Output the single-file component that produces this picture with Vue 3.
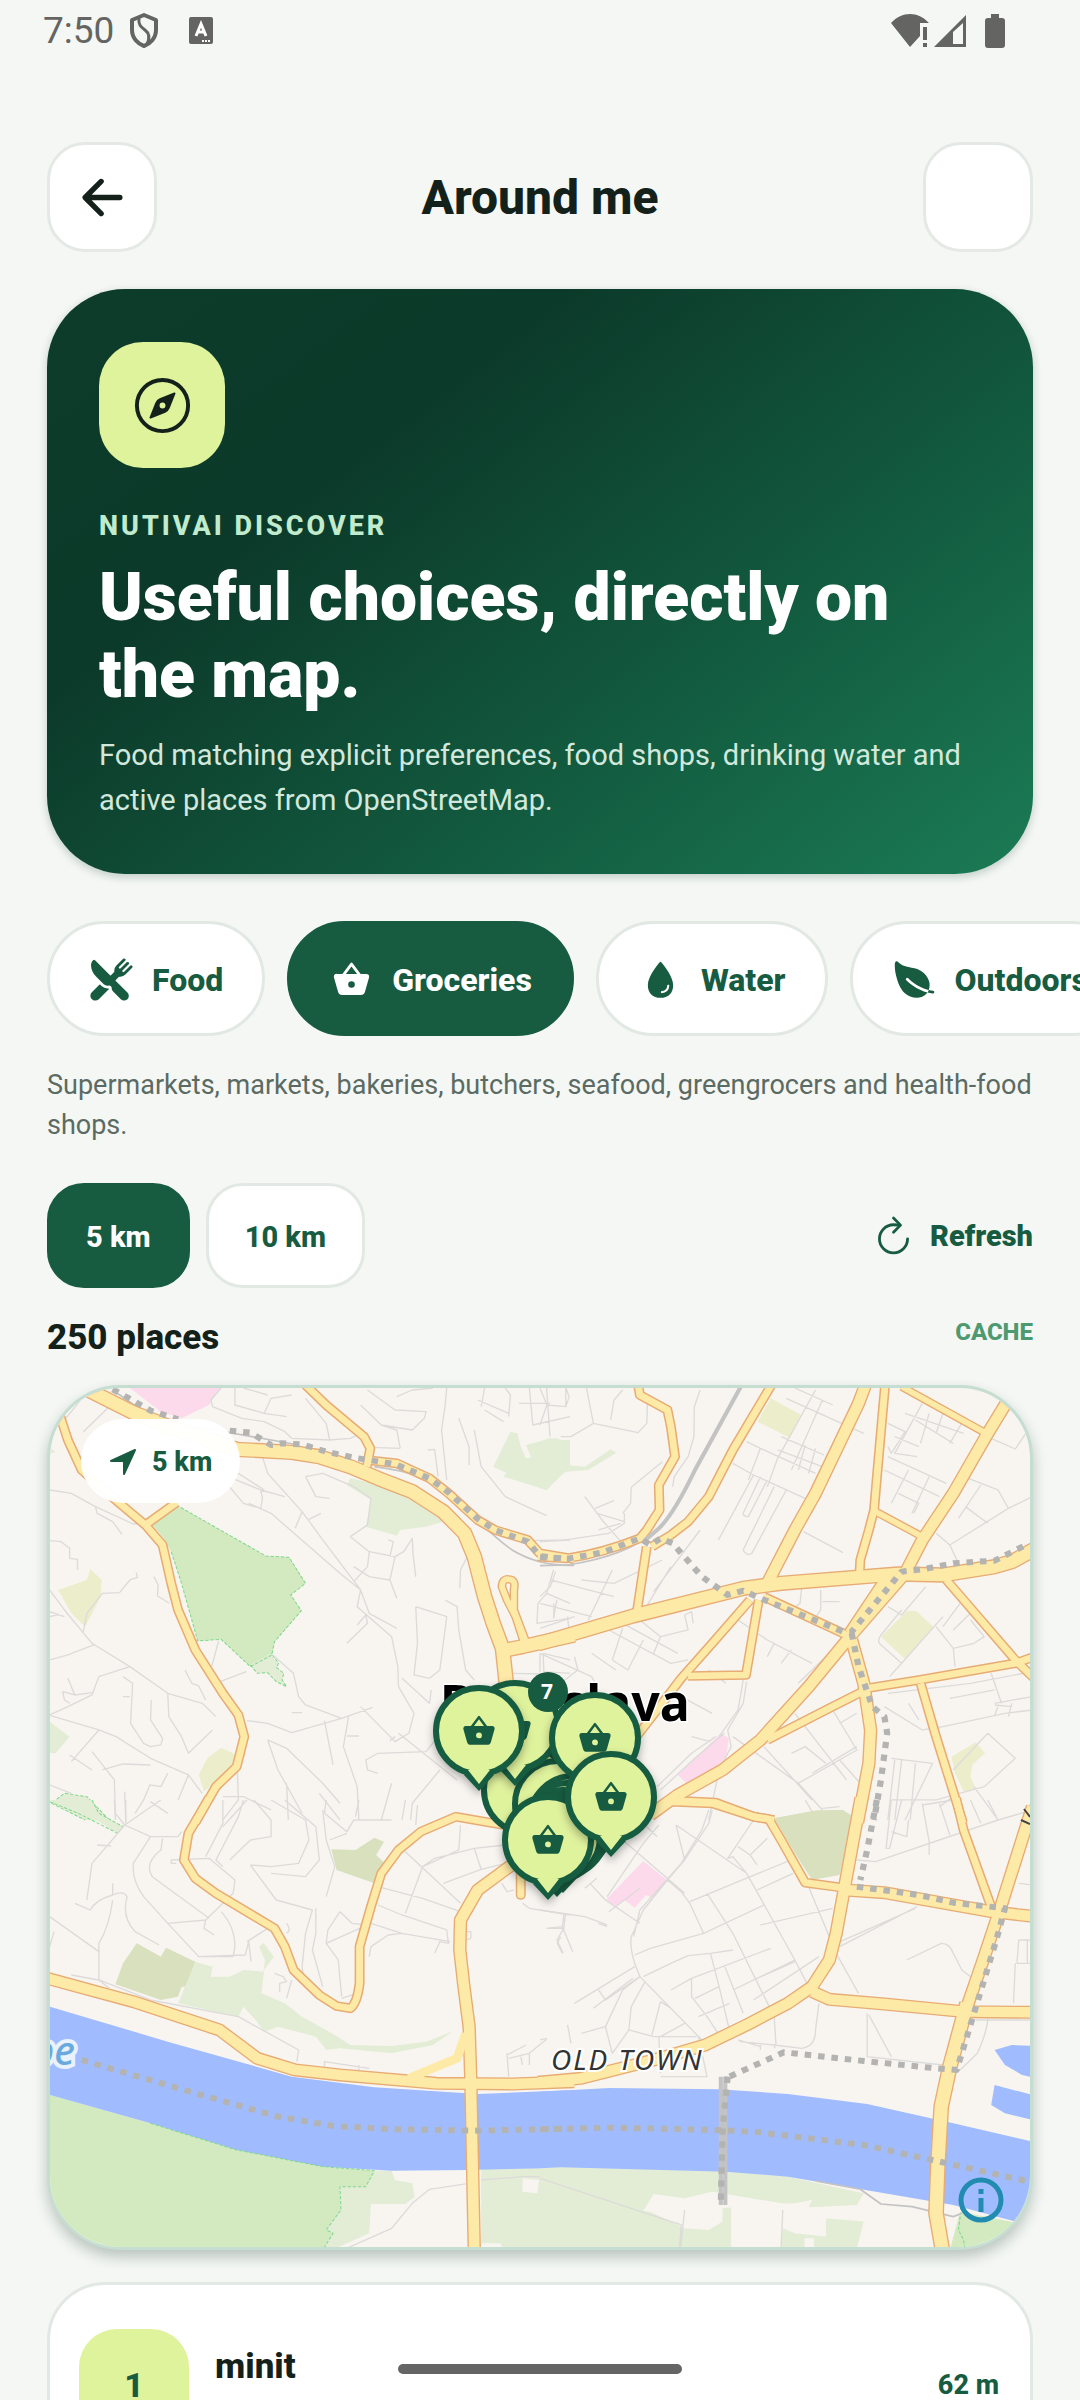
<script setup>
import { ref } from 'vue'

const basketPath =
  'M424.11 192H360L268.8 70.4a16 16 0 0 0-25.6 0L152 192H87.89a32.57 32.57 0 0 0-32.62 32 30.3 30.3 0 0 0 1.31 9l46.27 163.14a50.72 50.72 0 0 0 48.84 36.91h208.62a51.21 51.21 0 0 0 49-36.86l46.33-163.36a15.62 15.62 0 0 0 .46-2.36l.53-4.41a13.3 13.3 0 0 0 .06-1.33A32.57 32.57 0 0 0 424.11 192zM256 106.67L320 192H192zM256 350.26a37.71 37.71 0 1 1 37.88-37.71A37.88 37.88 0 0 1 256 350.26z'

const categories = [
  {
    id: 'food',
    label: 'Food',
    path: 'M357.57 223.94a79.48 79.48 0 0 0 56.58-23.44l77-76.95c6.09-6.09 6.65-16 .85-22.39a16 16 0 0 0-23.17-.56l-68.63 68.58a12.29 12.29 0 0 1-17.37 0c-4.79-4.78-4.53-12.86.25-17.64l68.33-68.33a16 16 0 0 0-.56-23.16A15.62 15.62 0 0 0 440.27 56a16.71 16.71 0 0 0-11.81 4.9l-68.27 68.26a12.29 12.29 0 0 1-17.37 0c-4.78-4.78-4.53-12.86.25-17.64l68.33-68.31a16 16 0 0 0-.56-23.16A15.62 15.62 0 0 0 400.26 16a16.73 16.73 0 0 0-11.81 4.9L311.5 97.85a79.49 79.49 0 0 0-23.44 56.59v8.23a16 16 0 0 1-4.69 11.33l-35.61 35.62a4 4 0 0 1-5.66 0L68.82 36.33a16 16 0 0 0-22.58-.06C31.09 51.28 23 72.47 23 97.54c-.1 41.4 21.66 89 56.79 124.08l85.45 85.45A64.79 64.79 0 0 0 211 326a64 64 0 0 0 16.21-2.08 16.24 16.24 0 0 1 4.07-.53 15.93 15.93 0 0 1 10.83 4.25l11.39 10.52a16.12 16.12 0 0 1 4.6 11.23v5.54a47.73 47.73 0 0 0 13.77 33.65l90.05 91.57.09.1a53.29 53.29 0 0 0 75.36-75.37L302.39 269.9a4 4 0 0 1 0-5.66L338 228.63a16 16 0 0 1 11.32-4.69zM211 358a97.32 97.32 0 0 1-68.36-28.25l-13.86-13.86a8 8 0 0 0-11.3 0l-85 84.56c-15.15 15.15-20.56 37.45-13.06 59.29a30.63 30.63 0 0 0 1.49 3.6C31 484 50.58 496 72 496a55.68 55.68 0 0 0 39.64-16.44L225 365.66a4.69 4.69 0 0 0 1.32-3.72v-.26a4.63 4.63 0 0 0-5.15-4.27A97.09 97.09 0 0 1 211 358z'
  },
  { id: 'groceries', label: 'Groceries', path: basketPath },
  {
    id: 'water',
    label: 'Water',
    path: 'M265.12 60.12a12 12 0 0 0-18.23 0C215.23 97.15 112 225.17 112 320c0 88.37 55.64 144 144 144s144-55.63 144-144c0-94.83-103.23-222.85-134.88-259.88zM272 412a12 12 0 0 1-11.34-16 11.89 11.89 0 0 1 11.41-8A60.06 60.06 0 0 0 332 328.07a11.89 11.89 0 0 1 8-11.41A12 12 0 0 1 356 328a84.09 84.09 0 0 1-84 84z'
  },
  {
    id: 'outdoors',
    label: 'Outdoors',
    path: 'M161.35 242a16 16 0 0 1 22.62-.68c73.63 69.36 147.51 111.56 234.45 133.07 11.73-32 12.77-67.22 2.64-101.58-13.44-45.59-44.74-85.31-90.49-114.86-40.84-26.38-81.66-33.25-121.15-39.89-49.82-8.38-96.88-16.3-141.79-63.85-5-5.26-11.81-7.37-18.32-5.66-7.44 2-12.43 7.88-14.82 17.6-5.6 22.75-2 86.51 13.75 153.82 25.29 108.14 65.65 162.86 95.06 189.73 38 34.69 87.62 53.9 136.93 53.9a186 186 0 0 0 27.77-2.04c41.71-6.32 76.43-27.27 96-57.75-89.49-23.28-165.94-67.55-242-139.16a16 16 0 0 1-.65-22.65zM467.43 384.19c-16.83-2.59-33.13-5.84-49-9.77a157.71 157.71 0 0 1-12.13 25.68c-.73 1.25-1.5 2.49-2.29 3.71a584.21 584.21 0 0 0 58.56 12 16 16 0 1 0 4.87-31.62z'
  }
]
const activeCategory = ref('groceries')

const ranges = [5, 10]
const activeRange = ref(5)

const places = [{ rank: 1, name: 'minit', detail: 'Convenience · Bratislava, Šancová', distance: '62 m' }]

/* Map geometry, one entry per quadrant. Each quadrant has its own local grid. */
const tiles = [
  {
    at: 'translate(30 1370) scale(.3444 .3333)',
    areas: [
      ['pink', 'M285 50H555L520 105 440 145 380 125Z'],
      ['park', 'M425 405 685 558 752 562 800 640 757 675 788 722 710 815 702 855 640 890 555 808 487 813 440 640 410 545 385 500 355 465Z'],
      ['grass', 'M640 885 700 850 722 880 715 892 737 910 732 930 745 950 715 935 690 908 660 910Z'],
      ['grass', 'M930 325 1110 365 1200 455 1150 470 1075 480 1065 497 975 470 990 390 920 345Z'],
      ['grass', 'M1395 185 1415 190 1425 230 1440 265 1455 262 1440 225 1495 210 1510 238 1515 210H1568V290L1500 360 1375 320 1382 308 1345 290Z'],
      ['field', 'M175 597 208 630 205 680 160 770 120 730 82 660 165 630Z'],
      ['field', 'M555 1133 600 1155 590 1200 535 1240 505 1265 490 1215 515 1165Z'],
      ['grass', 'M57 1055 115 1100 75 1150 57 1148Z'],
      ['grass', 'M57 235 75 245 57 252Z'],
      ['grass', 'M62 1300 100 1270 165 1280 230 1350H160Z']
    ],
    edges: [
      'M425 405 685 558 752 562 800 640 757 675 788 722 710 815 702 855 640 890 555 808 487 813 440 640 410 545',
      'M640 885 660 910 690 908 715 935 745 950 732 930 737 910 715 892 722 880 700 850',
      'M230 1350 165 1280 100 1270 62 1300 160 1350'
    ],
    minor:
      'M100 150 155 80M155 185 235 105M57 360 120 370 190 410 300 462 340 460M190 410 195 430 240 455 267 493M57 512 90 515 115 535V565L138 568V600M57 660 100 720 180 820 290 890 400 970 500 1000 540 1040M57 725 100 740M57 740 85 733M155 785 165 730 210 670 260 668 290 630 312 622 308 607M57 870 110 855 185 825M360 620 372 645 370 678 405 700M548 812 528 888M552 935 628 905M450 900 470 940 490 948 510 990M57 1035 110 1010 180 975 200 920 290 890M180 968 130 975 95 965 100 990 115 1000M110 925 130 975M270 920 298 940 292 1060 330 1120 350 1130 380 1125 385 1105 350 1050 352 990M270 980H290M60 1037 200 1080 250 1100 350 1165 460 1215 500 1270M200 1080 120 1175M115 1155 180 1200M210 1200 270 1182 350 1185M180 1145 245 1230 248 1350M275 1265 278 1350M400 970 403 1040 440 1100 460 1150 530 1080M400 1210 380 1250 348 1245 330 1290 305 1330M460 1215 430 1290M57 1245 120 1270M560 1280 620 1280 700 1320M602 1200 605 1290 560 1350M555 54 525 90 530 110 615 145 680 155 740 185 760 205M595 54 595 105 680 130 700 85 760 75M620 54 690 75M680 130 745 140M800 85 860 160 870 210M870 210 930 205 960 190M760 205 870 210M960 105 1020 165 1065 180 1075 235M1075 235 990 232M1020 165 1110 180 1145 145 1150 125 1060 120 980 60M1065 80 1110 60 1170 54M1210 54 1205 110 1195 180 1210 330M1245 145 1275 230 1275 285M1155 240 1175 238 1185 320M1290 180 1310 290 1380 380 1500 437M1300 90 1390 130M1320 120 1375 155M1310 110 1320 54M1380 54 1395 75 1390 140M1420 100H1510M1450 54 1460 165 1568 140M1500 54 1510 200M575 320 670 360 740 380M670 360 675 385 670 415 620 400 575 345M605 310 680 360M675 260 690 310 790 425 850 510 960 660M635 400 700 430 800 520 900 610 960 660 950 710 1050 800 1068 890 1070 950 1115 1030 1100 1090 1060 1115 960 1010M790 425 770 475M810 448 845 430M800 320 850 310 940 350 990 385 980 465 930 500M800 320 830 380 870 385M930 500 985 545 980 590 940 635M985 545 1060 560 1085 545 1110 505 1112 550 1120 620M1040 510 1055 515 1045 560M1060 560 1045 630 985 620 940 590M1045 630 1065 685M975 735 950 765M975 735 980 760 920 820M960 660 985 730 1065 775M1270 560 1250 600 1248 655M1205 690 1240 710 1245 780 1265 900 1290 930M1120 710 1125 820 1115 915 1160 925M1160 925 1190 900 1210 740 1120 710M705 855 765 910 780 980 800 1005 905 1045 995 1012M905 1045 760 1088 690 1060 630 1052M855 1052 880 1185M925 1040 910 1130 950 1250 955 1350M690 1110 745 1135 850 1240 900 1300M690 1110 720 1200 790 1330M920 1098H955M760 1028H790M1190 1040 1200 1080 1150 1145 1010 1150 975 1170 980 1200 1010 1210M1080 925 1160 1000 1165 960M1060 1100 1045 1112M1070 1090 1240 1230M1190 1200 1110 1300 1105 1350M1568 510 1440 512M1520 600 1500 670 1475 700 1472 760 1568 745M1500 670 1568 700M1530 690 1520 745M1490 850 1492 905 1568 910M1490 850 1568 870M1400 910 1492 912M745 1240 750 1350M840 1270 900 1350M1050 1240 1020 1350',
    major: [
      ['w', 'M150 50 300 128 400 168 600 238 760 247 840 260 930 290 1010 325 1110 365 1200 425 1262 490 1290 560 1320 680 1345 760 1372 835 1385 960'],
      ['w', 'M1372 842 1430 830 1580 795'],
      ['n', 'M88 140 110 210 150 300 260 400 335 465 385 525 410 640 430 720 480 840 560 970 605 1035 622 1100 600 1190 540 1250 480 1358'],
      ['n', 'M335 465 425 398'],
      ['n', 'M800 45 860 105 970 200 988 235 978 290'],
      ['n', 'M978 270 1065 280 1160 325 1215 370 1300 450 1350 480 1445 510 1480 550 1580 567'],
      ['s', 'M1435 820 1410 740 1385 690 1370 650Q1372 625 1390 628 1412 628 1405 660V720L1438 810']
    ],
    rail: ['M1000 290Q1160 310 1240 380 1330 490 1400 540 1480 590 1580 586', 'M240 60 330 125 430 160 700 210 780 225'],
    bounds: ['M240 58 300 92 350 122 430 148M580 182 640 188 700 225 730 220 790 223 860 245 940 263 1060 282 1160 325 1215 367 1300 447 1350 480 1445 515 1480 558 1568 568']
  },
  {
    at: 'translate(540 1370) scale(.3444 .3333)',
    areas: [
      ['grass', 'M25 205H50L75 215 80 240 75 285 130 290 205 238 222 248 140 300 75 305 55 320 20 360 0 355V215Z'],
      ['field', 'M670 85 758 135 725 203 632 155Z'],
      ['field', 'M1065 723H1092L1142 770 1060 867 990 800Z'],
      ['field', 'M1265 1117 1292 1150 1255 1185 1250 1220 1265 1255 1232 1268 1205 1210 1195 1160Z'],
      ['pink', 'M525 1090 548 1105 540 1170 430 1245 400 1215Z'],
      ['wood', 'M680 1345 800 1322 880 1320 910 1350Z']
    ],
    edges: [],
    minor:
      'M0 54 20 105 75 110V54M20 105 0 165M75 54 85 80 75 110M135 54 155 160 90 200 60 200M155 160 285 188 310 160 312 100M205 150 215 90 240 60M465 60 448 110 447 200 430 260 390 320 385 350M355 275 265 352 263 400 240 430M130 380 180 450 235 515M160 415 215 392M165 430 245 455M170 480 235 460M245 430V460L200 490 60 512 0 515M0 700 150 740M45 605 30 650 0 680M30 630 215 680M210 600 140 750M120 630 215 640 355 570M330 665 465 480M380 590 285 750M560 280 620 315 770 385M600 215 640 235 800 310M640 235 605 330M800 60 690 265 660 350M820 90 730 300M740 54 850 105M715 85 940 190M700 200 825 255M690 240 820 290M770 225 750 300M800 235 780 310M620 315 560 430 518 510M640 320 590 430Q590 440 605 440L660 330M680 350 590 540Q600 560 615 550L715 360M765 485 880 548M1010 160 1060 185 1020 250 1010 230M1110 100 1030 250 1095 260M1060 130 1230 190M1130 130 1105 220M1090 150 1200 220M1230 150 1190 220M1170 130 1150 190M1030 200 1100 230M1010 260 1180 340M1000 300 1160 380M1070 300 1020 400M1130 320 1080 430M1040 370 1100 400 1085 430M1230 320 1330 360 1360 415 1430 380M1280 345 1215 445M1360 415 1190 525 1150 490M1235 410 1300 460M1190 525 1215 580M1310 205 1380 237 1430 160M0 850 150 920 170 960M60 940 110 900 100 860M200 780 380 880M240 760 400 850M150 850 220 900M210 870 255 900 300 810M240 775 210 870M290 750 350 800 330 850M350 800 430 780 420 735 440 725 445 760M380 880 430 870M575 750 660 810 790 880M680 820 660 860M730 840 700 880M590 930 575 1020 520 1100M600 935 590 1000 545 1080 555 1130 520 1200 490 1350M760 650 755 700 720 730M815 660 815 720 790 760M820 695H870M750 940 880 810M560 1100 750 1240 820 1320M650 1130 790 1290M740 1030 890 1230M730 1150 770 1130 830 1180M870 1060 920 1030M850 1020 920 1140 750 1240M920 1130 790 1210M870 1170 930 1240M340 1250 440 1150 510 1100M350 1260 450 1165 535 1090M440 1100 495 1115M490 900 540 940M410 980 500 1030M985 820Q980 810 990 795L1050 720M985 820 1050 880 1170 740M1050 880 1015 920M1010 710 1050 735 1120 650M1150 770 1200 835 1260 820 1290 800 1250 750M1250 730 1200 780M1200 835 1205 890M1170 770 1220 700M1010 970 1250 940 1430 905M1000 1010 1110 1080 1170 1070 1350 1030 1430 1020M1070 1000 1100 1050M1190 985 1320 960M1320 1005 1370 1010M1330 1010 1320 1035M1370 1000 1360 1040M1430 980 1320 1000M1300 1090 1380 1165 1290 1250 1150 1290 1020 1290M1300 1090 1200 1200M1020 1165 1140 1180 1060 1350M1030 1170 1010 1350M1050 1170 1030 1350M1090 1180 1075 1350M1200 1280 1160 1310M1260 1250 1330 1350M1310 910 1340 1000M0 850V905M80 740 85 790M0 775 100 740M40 700V740',
    major: [
      ['w', 'M-6 822 270 738 590 655 700 640 1040 612 1170 615 1320 590 1370 575 1440 535'],
      ['m', 'M945 45 925 100 800 370 740 480 655 650'],
      ['n', 'M672 45 560 240 490 380 430 455 380 495 325 530'],
      ['n', 'M285 45 290 75 370 120 380 170 392 260 345 345 347 420 310 480 290 505Q180 550 80 565L-6 560'],
      ['n', 'M310 530 280 735'],
      ['m', 'M1365 80 1300 190 1200 370 1110 510 1060 610 900 800 780 950 640 1110 530 1200 400 1275 320 1335'],
      ['m', 'M1010 620 900 790'],
      ['n', 'M1002 45 980 300 970 420 955 480 930 570 928 610'],
      ['s', 'M975 425 1110 500'],
      ['s', 'M1050 50 1295 190'],
      ['n', 'M610 690 500 820 410 925 340 1020 280 1100'],
      ['n', 'M635 690 598 915 430 918'],
      ['n', 'M650 680 890 795'],
      ['m', 'M905 810 940 940 960 1080 955 1180 922 1358'],
      ['n', 'M1180 630 1380 870 1440 930'],
      ['n', 'M950 955 1100 930 1380 880 1440 858'],
      ['n', 'M1105 940 1150 1100 1228 1358'],
      ['n', 'M945 960 840 1015 660 1110'],
      ['n', 'M390 1292 510 1298 620 1340 680 1350'],
      ['s', 'M1440 1290 1415 1358']
    ],
    rail: ['M80 585Q250 560 340 480', 'M0 587 80 585'],
    rail2: ['M583 50 450 300Q385 440 340 480L300 515'],
    bounds: ['M0 562 80 566 180 548 290 505 320 525 350 505 385 520 470 620 545 675 590 662 640 685 880 785 905 785 1050 605 1110 598 1200 580 1320 572 1420 520', 'M905 790 925 890 965 1010 1000 1040 1008 1090 990 1230 970 1350']
  },
  {
    at: 'translate(30 1800) scale(.3444 .3333)',
    areas: [
      ['grass', 'M57 0H180L200 40 270 80 255 100 200 65Z'],
      ['wood', 'M310 430 380 470 395 443 480 485 465 560 440 560 430 590 380 600 248 553 270 490Z'],
      ['grass', 'M480 485 530 500 525 530 580 530 620 510 678 515 682 480 665 440 678 428 708 470 680 510 672 580 740 610 790 650 860 690 900 715 930 735 1050 738 1150 725 1230 693 1170 735 1050 760 900 745 860 750 830 710 720 680 680 695 655 660 620 620 605 650 430 610Z'],
      ['wood', 'M1000 113 1028 125 1005 165 1030 190 1000 250 890 210 875 148 945 150Z'],
      ['park', 'M57 885 350 970 600 1050 850 1100 1000 1112 975 1160H900L903 1230 860 1290 880 1300 850 1350H57Z'],
      ['grass', 'M1000 1112H1050L1060 1140 1110 1150 1117 1190 1090 1212H990L985 1300 900 1340 850 1350 880 1300 860 1290 903 1230 900 1160H975Z'],
      ['grass', 'M1310 1105H1580V1350H1375L1365 1330H1310Z'],
      ['land', 'M1430 1135 1478 1140 1473 1180 1430 1175Z'],
      ['water', 'M57 620 400 725 760 830 1000 862 1300 882 1580 870V1103L1270 1110 1050 1112 850 1100 600 1050 350 970 57 885Z']
    ],
    edges: ['M350 970 600 1050 850 1100 1000 1112 975 1160H900L903 1230 860 1290 880 1300 850 1350M57 5 140 40 255 100 270 80 200 40 180 0'],
    minor:
      'M245 0 248 40 275 75 350 110 430 110 440 95M275 75 230 130 180 190 165 300M275 75 380 0M278 0V70M350 5 400 40M195 135 235 138M350 110 300 190Q295 240 330 290L400 370 510 360 590 280 595 240 520 175 410 180V190H425M385 115 380 150Q330 190 355 230L520 355M510 360 505 385 535 405M400 370 490 470 590 470 595 440Q595 380 555 335M490 470 625 465 635 425 642 485M630 425 690 385M240 250V285Q190 300 175 330L130 310M240 285Q270 270 282 290 265 350 305 395L375 435M240 300Q230 380 200 430V540L230 565M57 350 200 455M57 440 70 395M510 170 560 70 560 0M560 80 630 0M620 0 605 50 540 180 560 200M650 0 700 60 700 110 640 120 580 180M700 0 800 60 810 120 780 190 700 200 640 195M640 195 715 300 820 330 800 400 790 500 795 540M740 0 830 80 840 180 800 230 700 220M850 30 860 120 885 200 860 290M830 325 830 400 820 450 850 560M900 335 865 390 860 430 895 480 905 590M900 335 935 370 980 375M905 595 950 580M860 430 990 370 1080 400 1220 425M1080 345 1210 390 1215 430 1190 425 1175 460M1010 260 1140 295 1250 335M1010 315 1080 345M1250 75 1245 150 1140 200 1090 340M1090 155 1250 310M1140 200 1175 175 1290 145 1380 135M1200 250 1310 208 1380 190M1290 145 1310 208M985 470 990 440 1040 405 1080 400M860 0 855 40 920 95 940 60 1050 60M870 120 920 100M955 0 945 50M1125 15 1120 75M1090 0 1080 60M745 370Q760 390 745 400M710 520 735 530 745 545 725 550V575M760 540 745 595M120 525 200 540 350 600 605 650 780 750 775 785M855 800V785L985 805M955 795V810M1385 760 1390 830M1385 765 1440 735M1390 775 1450 760V795M1425 770 1430 795M1450 760 1500 718M1265 395H1280V415L1265 420M1430 310 1450 325 1568 345M1555 340 1550 385H1500M1550 385 1530 420 1548 460M1370 250 1385 275 1405 270M1310 1140 1430 1130 1480 1130 1568 1165M1265 1152 1160 1168 1110 1210 1050 1285 920 1345',
    major: [
      ['n', 'M520 -6 460 100 447 180 480 235 540 280 710 385 740 440 765 510 840 585 890 618 930 625Q950 610 957 550V440L990 320 1020 220 1070 150 1135 95 1237 50 1375 75'],
      ['m', 'M1405 190 1300 270 1250 360 1248 450 1260 560 1275 680 1280 840 1285 1100 1290 1350'],
      ['m', 'M50 535 300 605 550 690 660 775 770 810 900 825 1180 850 1400 852 1580 845'],
      ['n end', 'M1425 285V190'],
      ['x', 'M1100 835 1240 775 1265 700']
    ],
    rail: [],
    bounds: ['M150 780 430 865 720 950 880 978 1060 988 1300 992 1568 986']
  },
  {
    at: 'translate(540 1800) scale(.3444 .3333)',
    areas: [
      ['wood', 'M680 55 800 32 880 30 910 50 870 225 790 240 740 160Z'],
      ['pink', 'M300 183 368 240 325 293 308 285 275 323 245 300 215 320 193 298Z'],
      ['grass', 'M0 1100H540L720 1130 940 1180 920 1215 780 1222 790 1200 740 1210 555 1215 530 1240 500 1245 460 1290 415 1285 555 1220V1350H0Z'],
      ['land', 'M330 1182 420 1195 500 1175 700 1210 780 1222 555 1222 530 1225 530 1265 490 1290 420 1285 320 1235 300 1232Z'],
      ['grass', 'M705 1285 740 1300 830 1310 830 1255 940 1265 920 1345H700Z'],
      ['land', 'M768 1315H795V1350H768Z'],
      ['water', 'M0 875 200 864 520 868 720 882 950 912 1200 970 1430 1025V1250L1380 1265 1200 1215 1000 1180 720 1130 540 1115 60 1102 0 1105Z'],
      ['park', 'M1220 1235 1380 1268 1430 1250V1350H1190Z'],
      ['water', 'M1430 738 1370 735 1320 750 1350 795 1400 825 1430 832Z'],
      ['water', 'M1320 855 1430 885V960L1350 940 1310 915Z']
    ],
    edges: ['M1220 1250 1215 1290 1230 1320 1235 1350'],
    minor:
      'M500 30 490 70 420 180 370 240 300 330 265 410Q260 440 275 490L290 530 470 720M490 30 470 90 410 190 290 330 272 410M395 75 600 220 740 480 780 560M600 220 560 170 545 175 620 60M575 140 610 165 660 115M610 165 630 195M370 240 410 275 435 310 475 400M435 305 740 175M630 270 735 220M485 280 560 400 680 650 685 730M780 260 860 460 925 580M640 375 850 325M275 465 320 445 475 400 650 315M300 530 380 490 430 467 495 460 520 560 550 690M380 570 440 535 670 445M495 460 560 450M440 535 440 590 485 650 530 720M450 595 520 560M460 650 550 610M535 495 590 640M560 570 740 480M620 540 740 485M620 600 810 470M305 545 265 620 258 690 330 710 455 710M350 605 325 705M350 605 380 625M350 710 420 670M258 690 210 760 190 680 120 700M190 680 240 570 290 530 190 600 170 570M275 500 100 610M270 535 155 625M345 75 300 130 195 290M240 120 420 280M200 335 290 265M145 250 190 300 290 370M165 235 130 265M395 75 420 180M340 110 310 80M80 675 90 730M0 720 20 715M0 330 130 350 195 375M170 370 195 380M70 340 65 380 20 385M65 380 95 455M60 410 50 430 65 460M345 710 350 820M460 710 485 830H350M860 430 1090 325M870 440 1095 320M1065 480 1165 430Q1190 430 1200 460L1225 510 1250 530M920 180 975 185 1330 60 1430 30M1020 0 1005 145H1015L1050 0M1020 95 1065 110 1070 60M1130 165V125L1110 10M1160 10 1190 105M1250 0 1280 70M1300 0 1325 50M1110 15 1200 0M1390 250 1430 255M1390 420H1430M1390 420 1385 490H1430M1380 490 1375 610M1415 420V490M950 640V770L1170 795M955 645 1020 770M810 610 800 690Q800 740 760 745L680 735 580 725M640 735V750M685 730 680 745M575 720 640 740M1300 655Q1300 690 1270 760L1220 810M1265 660H1430M0 1135 410 1275 405 1345M420 1230 408 1345M705 1230 700 1345M770 0 790 35M820 25 870 20M780 560 800 545',
    major: [
      ['n', 'M335 28 380 5 500 10 620 50 665 58 700 120 770 248 870 262'],
      ['m', 'M932 -6 890 230 860 400 840 480 790 560 720 610 600 675 480 735 330 780 120 835 -6 847'],
      ['m', 'M885 270 1000 278 1310 335 1440 350'],
      ['n', 'M1208 -6 1230 90 1310 320'],
      ['m', 'M1430 20 1335 330 1290 470 1240 620 1190 800'],
      ['w', 'M1240 610 1190 800 1165 920 1155 1100 1150 1240 1170 1360'],
      ['m', 'M790 575 840 598 1000 612 1230 635 1440 637']
    ],
    rail: ['M800 1143 930 1168 990 1212 1080 1220 1200 1250 1225 1240'],
    rail2: ['M525 830V1215', 'M538 830V1215'],
    bounds: ['M978 0 950 150 930 240', 'M920 260 1100 285 1200 308 1350 325 1325 420 1260 640 1210 810 1150 805 940 783 708 757 550 830', 'M545 830 538 900 530 1000 525 1210', 'M0 988 210 983 500 990 620 995 940 1035 1160 1085 1420 1145']
  }
]

/* x/y of each marker centre in map units, drawn back to front */
const hiddenPins = [
  [527, 1790],
  [589, 1803],
  [584, 1808],
  [578, 1812],
  [558, 1804],
  [573, 1819],
  [568, 1826],
  [563, 1833],
  [557, 1837]
]
const pins = [
  [515, 1726],
  [479, 1731],
  [595, 1738],
  [548, 1840],
  [611, 1797]
]
</script>

<template>
  <div class="screen">
    <header class="status">
      <div class="status-side">
        <span class="clock">7:50</span>
        <svg class="shield" width="30" height="36" viewBox="0 0 30 36" fill="none" stroke="currentColor" stroke-width="4">
          <path d="M15 2 27 7V17C27 25 21 31 15 33 9 31 3 25 3 17V7Z" stroke-linejoin="round" />
          <path d="M10 5C9 12 12 14 16 17S21 25 18 31" stroke-width="3" />
        </svg>
        <svg width="24" height="28" viewBox="0 0 24 28">
          <rect width="24" height="27" rx="2" fill="currentColor" />
          <path d="M7 19 12 7 17 19M9 15H15" fill="none" stroke="#fff" stroke-width="3" />
          <path d="M13 24H22" stroke="#fff" stroke-width="2" stroke-dasharray="2 1" />
        </svg>
      </div>
      <div class="status-side status-right">
        <svg width="76" height="34" viewBox="0 0 76 34" fill="currentColor">
          <path d="M0 9C11-3 27-3 38 9H29V22L19 33Z" />
          <path d="M32 13H36V26H32ZM32 29H36V33H32Z" />
          <path fill-rule="evenodd" d="M43 33 75 1V33ZM62 18V30H72V9Z" />
        </svg>
        <svg width="20" height="34" viewBox="0 0 20 34" fill="currentColor">
          <path d="M6 0H14V4H17Q20 4 20 7V31Q20 34 17 34H3Q0 34 0 31V7Q0 4 3 4H6Z" />
        </svg>
      </div>
    </header>

    <main class="content">
      <nav class="topbar">
        <button class="square" type="button" aria-label="Back">
          <svg width="57" height="57" viewBox="0 0 512 512" fill="none" stroke="currentColor" stroke-width="48" stroke-linecap="round" stroke-linejoin="round">
            <path d="M244 400 100 256l144-144M120 256h292" />
          </svg>
        </button>
        <h1 class="title">Around me</h1>
        <div class="square"></div>
      </nav>

      <section class="hero">
        <div class="hero-icon">
          <svg width="63" height="63" viewBox="0 0 512 512">
            <circle cx="256" cy="256" r="208" fill="none" stroke="currentColor" stroke-width="32" />
            <path fill="currentColor" fill-rule="evenodd" d="M350.67 150.93l-117.2 46.88a64 64 0 0 0-35.66 35.66l-46.88 117.2a8 8 0 0 0 10.4 10.4l117.2-46.88a64 64 0 0 0 35.66-35.66l46.88-117.2a8 8 0 0 0-10.4-10.4zM256 280a24 24 0 1 1 24-24 24 24 0 0 1-24 24z" />
          </svg>
        </div>
        <p class="eyebrow">NUTIVAI DISCOVER</p>
        <h2 class="headline">Useful choices, directly on the map.</h2>
        <p class="lead">Food matching explicit preferences, food shops, drinking water and active places from OpenStreetMap.</p>
      </section>

      <div class="chips">
        <button
          v-for="c in categories"
          :key="c.id"
          type="button"
          class="chip"
          :class="{ active: c.id === activeCategory }"
          @click="activeCategory = c.id"
        >
          <svg width="45" height="45" viewBox="0 0 512 512"><path :d="c.path" fill="currentColor" fill-rule="evenodd" /></svg>
          <span>{{ c.label }}</span>
        </button>
      </div>

      <p class="description">Supermarkets, markets, bakeries, butchers, seafood, greengrocers and health-food shops.</p>

      <div class="controls">
        <div class="ranges">
          <button v-for="r in ranges" :key="r" type="button" class="range" :class="{ active: r === activeRange }" @click="activeRange = r">
            {{ r }} km
          </button>
        </div>
        <button type="button" class="refresh">
          <svg width="45" height="45" viewBox="0 0 512 512" fill="none" stroke="currentColor" stroke-width="32" stroke-linecap="round" stroke-linejoin="round">
            <path d="M320 146s24.36-12-64-12a160 160 0 1 0 160 160" />
            <path d="M256 58l80 80-80 80" />
          </svg>
          Refresh
        </button>
      </div>

      <div class="summary">
        <h3 class="count">250 places</h3>
        <span class="source">CACHE</span>
      </div>

      <section class="map">
        <svg class="map-canvas" viewBox="50 1388 980 859" role="img" aria-label="Map of places">
          <defs>
            <filter id="pinShadow" x="-30%" y="-30%" width="160%" height="170%">
              <feDropShadow dx="0" dy="4" stdDeviation="4" flood-color="#000" flood-opacity="0.3" />
            </filter>
          </defs>
          <g v-for="(t, i) in tiles" :key="'a' + i" :transform="t.at">
            <path v-for="(a, j) in t.areas" :key="j" :class="a[0]" :d="a[1]" />
            <path v-for="(e, j) in t.edges" :key="'e' + j" class="edge" :d="e" />
            <path class="minor" :d="t.minor" />
            <path v-for="(r, j) in t.rail" :key="'r' + j" class="rail" :d="r" />
          </g>
          <g v-for="(t, i) in tiles" :key="'c' + i" :transform="t.at">
            <path v-for="(m, j) in t.major" :key="j" class="casing" :class="m[0]" :d="m[1]" />
          </g>
          <g v-for="(t, i) in tiles" :key="'f' + i" :transform="t.at">
            <path v-for="(m, j) in t.major" :key="j" class="fill" :class="m[0]" :d="m[1]" />
            <path v-for="(r, j) in t.rail2" :key="'r' + j" class="rail thick" :d="r" />
          </g>
          <g v-for="(t, i) in tiles" :key="'b' + i" :transform="t.at">
            <path v-for="(b, j) in t.bounds" :key="j" class="bound" :d="b" />
          </g>
          <path d="M1024 1809 1030 1817M1021 1820 1030 1824" stroke="#444" stroke-width="2" />

          <text class="city" x="440" y="1721">Bratislava</text>
          <text class="district" x="551" y="2070">OLD TOWN</text>
          <text class="river" x="31" y="2065">be</text>

          <g v-for="(p, i) in hiddenPins" :key="'h' + i" :transform="`translate(${p[0]} ${p[1]})`">
            <circle r="43" class="pin" />
            <path class="pin-tip" d="M-15 44-10 39H10L15 44 0 60Z" />
            <path class="pin-fill" d="M-11 39H11L0 53Z" />
          </g>
          <g v-for="(p, i) in pins" :key="'p' + i" :transform="`translate(${p[0]} ${p[1]})`">
            <g filter="url(#pinShadow)">
              <circle r="43" class="pin" />
              <path class="pin-tip" d="M-15 44-10 39H10L15 44 0 60Z" />
              <path class="pin-fill" d="M-11 39H11L0 53Z" />
            </g>
            <path class="basket" :d="basketPath" fill-rule="evenodd" transform="translate(-20 -20) scale(.078)" />
          </g>
          <circle cx="548" cy="1692" r="20" fill="#175c41" />
          <text class="badge" x="547" y="1699">7</text>

          <circle cx="981" cy="2200" r="20" fill="none" stroke="#218cb0" stroke-width="5" />
          <path d="M981 2189V2194M981 2198V2212" stroke="#218cb0" stroke-width="5" />
        </svg>
        <div class="map-range">
          <svg width="32" height="32" viewBox="0 0 512 512"><path fill="currentColor" d="M272 464a16 16 0 0 1-16-16.42V264.13a8 8 0 0 0-8-8H64.41a16.31 16.31 0 0 1-15.49-10.65 16 16 0 0 1 8.41-19.87l384-176.15a16 16 0 0 1 21.22 21.19l-176 384A16 16 0 0 1 272 464z" /></svg>
          {{ activeRange }} km
        </div>
      </section>

      <article v-for="p in places" :key="p.rank" class="place">
        <div class="rank">{{ p.rank }}</div>
        <div class="place-text">
          <h4 class="place-name">{{ p.name }}</h4>
          <p class="place-detail">{{ p.detail }}</p>
        </div>
        <span class="distance">{{ p.distance }}</span>
      </article>
    </main>
    <div class="home-bar"></div>
  </div>
</template>

<style>
body {
  margin: 0;
  background: #f4f7f4;
}
</style>

<style scoped>
* {
  box-sizing: border-box;
}
h1, h2, h3, h4, p {
  margin: 0;
}
button {
  font: inherit;
  color: inherit;
  background: none;
  border: 0;
  padding: 0;
  cursor: pointer;
}
svg {
  display: block;
  flex: none;
}
.screen {
  position: relative;
  height: 100vh;
  overflow: hidden;
  background: #f4f7f4;
  color: #14211b;
  font-family: Roboto, "Liberation Sans", sans-serif;
}
.status {
  display: flex;
  justify-content: space-between;
  align-items: center;
  height: 62px;
  padding: 0 75px 0 43px;
  color: #646562;
}
.status-side {
  display: flex;
  align-items: center;
}
.status-right {
  gap: 18px;
}
.clock {
  font-size: 37px;
  line-height: 44px;
}
.shield {
  margin: 0 30px 0 15px;
}
.content {
  display: flex;
  flex-direction: column;
  padding: 80px 47px 0;
}
.topbar {
  display: flex;
  align-items: center;
  justify-content: space-between;
}
.square {
  display: flex;
  align-items: center;
  justify-content: center;
  width: 110px;
  height: 110px;
  border: 3px solid #e4e9e5;
  border-radius: 38px;
  background: #fff;
}
.title {
  padding-top: 2px;
  font-size: 48px;
  line-height: 56px;
  font-weight: 800;
}
.hero {
  margin-top: 37px;
  padding: 53px 52px 51px;
  border-radius: 78px;
  background: linear-gradient(142deg, #0d3c2b 0%, #0c3a2a 30%, #125a3f 65%, #1b7b55 100%);
  box-shadow: 0 3px 8px rgba(10, 50, 35, 0.22);
}
.hero-icon {
  display: flex;
  align-items: center;
  justify-content: center;
  width: 126px;
  height: 126px;
  border-radius: 44px;
  background: #dff29c;
}
.eyebrow {
  margin-top: 42px;
  font-size: 27px;
  line-height: 32px;
  font-weight: 800;
  letter-spacing: 3px;
  color: #c1ebcd;
}
.headline {
  margin-top: 17px;
  font-size: 66px;
  line-height: 77px;
  font-weight: 900;
  color: #fff;
}
.lead {
  margin-top: 20px;
  font-size: 29px;
  line-height: 45px;
  color: #d2e8dc;
}
.chips {
  display: flex;
  gap: 22px;
  margin: 47px -47px 0 0;
  overflow: hidden;
}
.chip {
  display: flex;
  flex: none;
  align-items: center;
  gap: 18px;
  height: 115px;
  padding: 2px 39px 0;
  border: 3px solid #e2e8e3;
  border-radius: 58px;
  background: #fff;
  color: #175c41;
  font-size: 32px;
  font-weight: 800;
}
.active {
  background: #175c41;
  border-color: #175c41;
  color: #fff;
}
.description {
  margin-top: 29px;
  font-size: 27px;
  line-height: 40px;
  color: #5b6b63;
}
.controls {
  display: flex;
  justify-content: space-between;
  align-items: center;
  margin-top: 38px;
}
.ranges {
  display: flex;
  gap: 16px;
}
.range {
  height: 105px;
  padding: 2px 36px 0;
  border: 3px solid #e2e8e3;
  border-radius: 37px;
  background: #fff;
  color: #175c41;
  font-size: 29px;
  font-weight: 800;
}
.range.active {
  background: #175c41;
  border-color: #175c41;
  color: #fff;
}
.refresh {
  display: flex;
  align-items: center;
  gap: 14px;
  color: #175c41;
  font-size: 29px;
  font-weight: 900;
}
.summary {
  display: flex;
  justify-content: space-between;
  align-items: flex-start;
  margin: 30px 0 27px;
}
.count {
  font-size: 35px;
  line-height: 40px;
  font-weight: 800;
}
.source {
  font-size: 24px;
  line-height: 28px;
  font-weight: 800;
  color: #4d9a70;
}
.map {
  position: relative;
  overflow: hidden;
  border: 3px solid #c6ddd1;
  border-radius: 74px;
  background: #f8f5f1;
  box-shadow: 0 7px 14px rgba(20, 50, 35, 0.26);
}
.map-canvas {
  width: 100%;
  height: auto;
}
.map-canvas path {
  fill: none;
  stroke-linejoin: round;
}
.map-canvas .land { fill: #f8f5f1; }
.map-canvas .park { fill: #d3eac1; }
.map-canvas .grass { fill: #e3edd6; }
.map-canvas .field { fill: #ebedcb; }
.map-canvas .wood { fill: #d9e0bd; }
.map-canvas .pink { fill: #fddaeb; }
.map-canvas .water { fill: #a0bcff; }
.edge {
  stroke: #7fd88b;
  stroke-width: 3;
  stroke-dasharray: 10 5;
}
.minor {
  stroke: #dcdbd9;
  stroke-width: 4;
}
.rail {
  stroke: #c3c3c3;
  stroke-width: 5;
}
.rail.thick {
  stroke-width: 12;
}
.casing {
  stroke: #e7ac74;
}
.fill {
  stroke: #feeaa7;
}
.end { stroke-linecap: round; }
.casing.w { stroke-width: 46; }
.casing.m { stroke-width: 39; }
.casing.n { stroke-width: 29; }
.casing.s { stroke-width: 25; }
.casing.x { stroke-width: 0; }
.fill.w { stroke-width: 38; }
.fill.m { stroke-width: 31; }
.fill.n { stroke-width: 20; }
.fill.s { stroke-width: 17; }
.fill.x { stroke-width: 26; }
.bound {
  stroke: #b3b3b1;
  stroke-width: 18;
  stroke-dasharray: 19 20;
}
.city {
  font: 700 50px "Noto Sans", sans-serif;
  fill: #000;
  stroke: #fff;
  stroke-width: 3px;
  paint-order: stroke;
}
.district {
  font: italic 400 28px "Noto Sans", sans-serif;
  letter-spacing: 2px;
  fill: #333;
  stroke: #fff;
  stroke-width: 4px;
  paint-order: stroke;
}
.river {
  font: italic 500 40px "Noto Sans", sans-serif;
  fill: #6aa9de;
  stroke: #e9f1fb;
  stroke-width: 8px;
  paint-order: stroke;
}
.badge {
  font: 700 21px "Noto Sans", sans-serif;
  fill: #fff;
  text-anchor: middle;
}
.pin {
  fill: #dff29c;
  stroke: #175c41;
  stroke-width: 6;
}
.map-canvas .pin-tip { fill: #175c41; }
.map-canvas .pin-fill { fill: #dff29c; }
.map-canvas .basket { fill: #175c41; }
.map-range {
  position: absolute;
  top: 31px;
  left: 31px;
  display: flex;
  align-items: center;
  gap: 13px;
  height: 84px;
  padding: 2px 28px 0 26px;
  border-radius: 42px;
  background: rgba(255, 255, 255, 0.97);
  color: #175c41;
  font-size: 27px;
  font-weight: 800;
}
.place {
  display: flex;
  align-items: flex-start;
  gap: 26px;
  margin-top: 32px;
  padding: 44px 31px 44px 29px;
  border: 3px solid #e2e8e3;
  border-radius: 58px;
  background: #fff;
}
.rank {
  width: 110px;
  flex: none;
  border-radius: 38px;
  background: #dff29c;
  color: #175c41;
  font-size: 34px;
  line-height: 112px;
  height: 110px;
  font-weight: 800;
  text-align: center;
}
.place-text {
  flex: 1;
  padding-top: 18px;
}
.place-name {
  font-size: 35px;
  line-height: 40px;
  font-weight: 800;
}
.place-detail {
  margin-top: 10px;
  font-size: 26px;
  line-height: 36px;
  color: #5b6b63;
}
.distance {
  font-size: 27px;
  line-height: 112px;
  font-weight: 800;
  color: #175c41;
}
.home-bar {
  position: absolute;
  left: 50%;
  bottom: 26px;
  width: 284px;
  height: 10px;
  margin-left: -142px;
  border-radius: 5px;
  background: #656565;
}
</style>
